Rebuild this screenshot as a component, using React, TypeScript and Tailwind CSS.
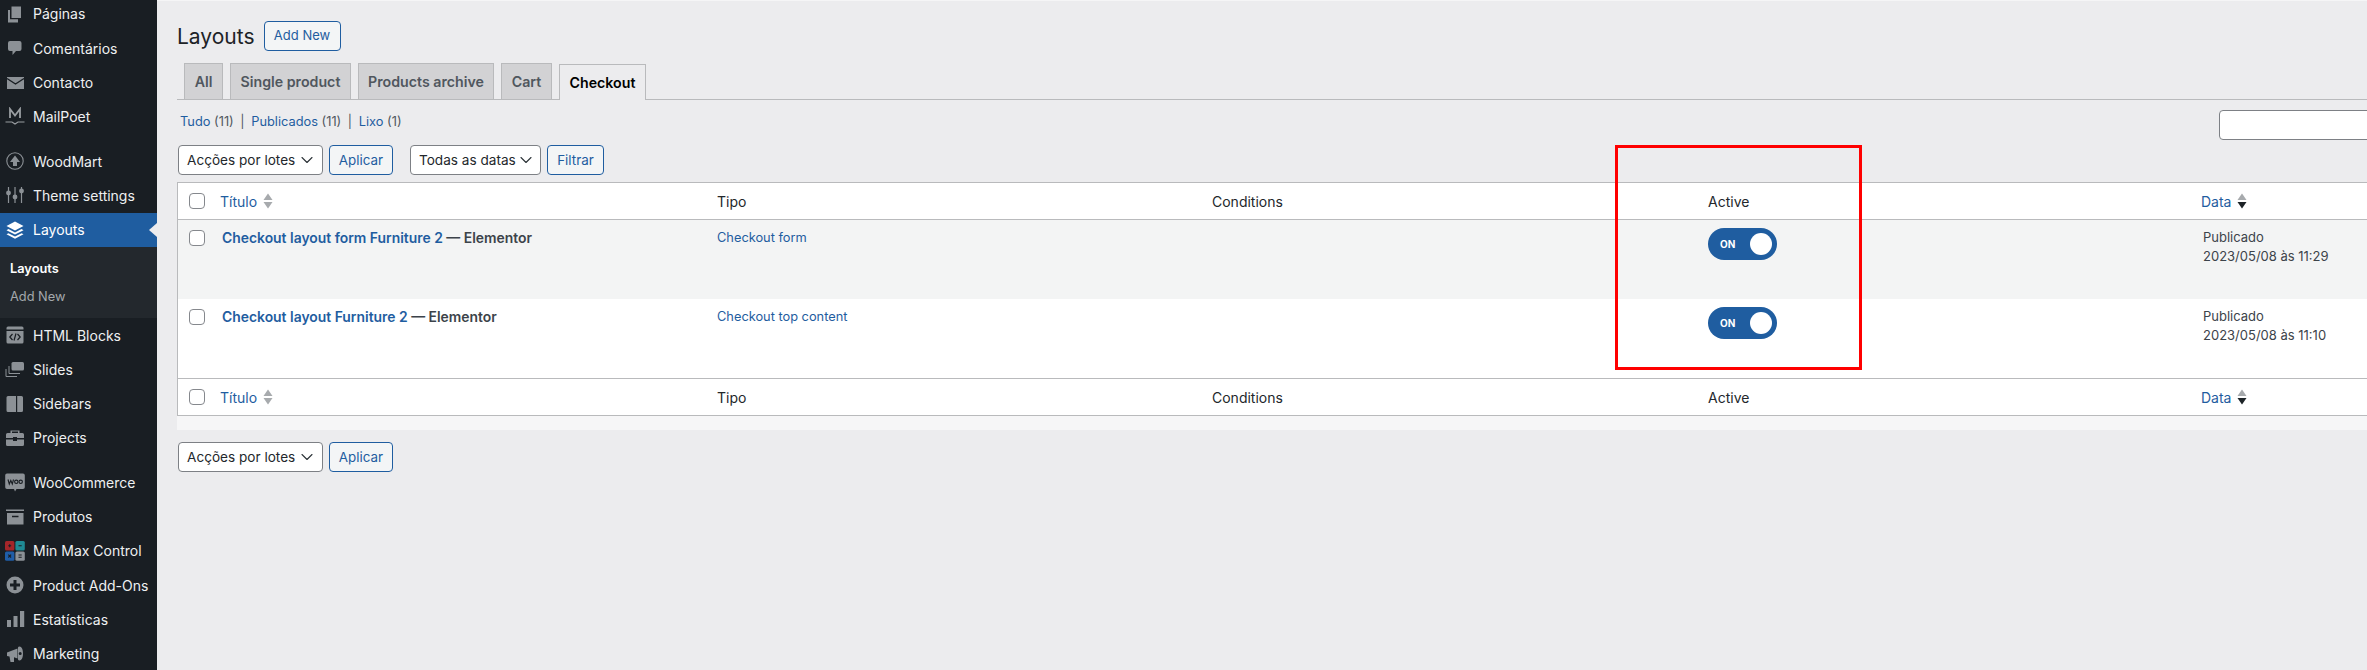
import { ReactNode } from "react";
import { ChevronDown } from "lucide-react";

const icons: Record<string, ReactNode> = {
  pages: (
    <>
      <path d="M6.500 2.500H16V14H6.500z" />
      <path d="M3 6v12.500h10V15.200H5V6z" />
    </>
  ),
  comments: <path d="M5 3h9.500a2 2 0 0 1 2 2v6a2 2 0 0 1-2 2H11l-3.500 4v-4H5a2 2 0 0 1-2-2V5a2 2 0 0 1 2-2z" />,
  mail: (
    <>
      <path d="M2 4h17v12H2z" />
      <path d="M2 5.500 10.500 11 19 5.500" fill="none" stroke="#191e23" strokeWidth="1.400" />
    </>
  ),
  mailpoet: (
    <g fill="none" stroke="#9a9ea2">
      <path d="M5 11V2l5 6.500L15 2v9" strokeWidth="1.800" />
      <path d="M0.500 15h6.500l3 2 3-2h6.500" strokeWidth="1.200" />
    </g>
  ),
  woodmart: (
    <>
      <circle cx="10" cy="10" r="8.200" fill="none" stroke="#8c9196" strokeWidth="1.100" />
      <path d="M10 4.500 15 11h-3v4H8v-4H5z" />
    </>
  ),
  sliders: (
    <g stroke="#8c9196" strokeWidth="1.200">
      <path d="M3.500 2v16M10 2v16M16.500 2v16" fill="none" />
      <circle cx="3.500" cy="8" r="1.800" />
      <circle cx="10" cy="12" r="1.800" />
      <circle cx="16.500" cy="6" r="1.800" />
    </g>
  ),
  layers: (
    <g fill="#fff">
      <path d="M10 1.500 18.500 6 10 10.500 1.500 6z" />
      <path d="M3.500 9 10 12.400 16.500 9l2 1.200L10 14.600 1.500 10.200z" />
      <path d="M3.500 13.200 10 16.500l6.500-3.300 2 1.100L10 18.700l-8.500-4.400z" />
    </g>
  ),
  html: (
    <>
      <path d="M3 1.500h14a1.500 1.500 0 0 1 1.500 1.500v1.500h-17V3A1.500 1.500 0 0 1 3 1.500z" />
      <path d="M1.500 6h17v11a1.500 1.500 0 0 1-1.500 1.500H3A1.500 1.500 0 0 1 1.500 17z" />
      <path d="M7.500 9 4.800 12l2.700 3M12.500 9l2.700 3-2.700 3M11 8.500l-2 7" fill="none" stroke="#191e23" strokeWidth="1.200" />
    </>
  ),
  slides: (
    <>
      <path d="M8 3h9.500A1.500 1.500 0 0 1 19 4.500V10a1.500 1.500 0 0 1-1.500 1.500H8A1.500 1.500 0 0 1 6.500 10V4.500A1.500 1.500 0 0 1 8 3z" />
      <path d="M4 7v7.500h11M1 10v7.500h11" fill="none" stroke="#8c9196" strokeWidth="1" />
    </>
  ),
  sidebars: <path fillRule="evenodd" d="M3 2h13.500A1.500 1.500 0 0 1 18 3.500v13a1.500 1.500 0 0 1-1.500 1.500H3a1.500 1.500 0 0 1-1.500-1.500v-13A1.500 1.500 0 0 1 3 2zm8 0v16h1.200V2z" />,
  projects: (
    <>
      <path d="M7 5V3.500h6V5h1.500V2.500h-9V5z" />
      <path d="M2.500 5h15A1.500 1.500 0 0 1 19 6.500V10h-7V9H8v1H1V6.500A1.500 1.500 0 0 1 2.500 5z" />
      <path d="M1 11.500h7V13h4v-1.500h7v5a1.500 1.500 0 0 1-1.500 1.500h-15A1.500 1.500 0 0 1 1 16.500z" />
    </>
  ),
  woo: (
    <>
      <path d="M2 1.500h16a1.800 1.800 0 0 1 1.800 1.800v12a1.800 1.800 0 0 1-1.800 1.800h-6.500L10 19.500 9 17.100H2a1.800 1.800 0 0 1-1.800-1.800v-12A1.800 1.800 0 0 1 2 1.500z" />
      <path d="M3 7.500 4.300 12l1.500-3.500L7.300 12l1.200-4.500" fill="none" stroke="#191e23" strokeWidth="1.100" />
      <circle cx="11.300" cy="9.800" r="1.700" fill="none" stroke="#191e23" strokeWidth="1.100" />
      <circle cx="15.700" cy="9.800" r="1.700" fill="none" stroke="#191e23" strokeWidth="1.100" />
    </>
  ),
  archive: (
    <>
      <path d="M1 2.500h18V4H1z" />
      <path fillRule="evenodd" d="M2 6h16.500v11.500H2zM7 8.800v1.400h6.500V8.800z" />
    </>
  ),
  minmax: (
    <>
      <rect x="0" y="0" width="9.400" height="9.400" rx="1.500" fill="#a3262a" />
      <rect x="10.400" y="0" width="9.400" height="9.400" rx="1.500" fill="#1f8a94" />
      <rect x="0" y="10.400" width="9.400" height="9.400" rx="1.500" fill="#1f5da8" />
      <rect x="10.400" y="10.400" width="9.400" height="9.400" rx="1.500" fill="#8c9196" />
      <path d="M3.200 4.700h3M4.700 3.200v3M13.500 4.700h3.200M3.300 13.700l2.800 2.800M6.100 13.700l-2.800 2.800M13.500 14h3.200M13.500 16.200h3.200" stroke="#191e23" strokeWidth="1.100" fill="none" />
    </>
  ),
  addons: (
    <path fillRule="evenodd" d="M10 1.500a8.500 8.500 0 1 1 0 17 8.500 8.500 0 0 1 0-17zM8.500 5v3.500H5v3h3.500V15h3v-3.500H15v-3h-3.500V5z" />
  ),
  stats: <path d="M2 11h4v7H2zM8.500 7h4v11h-4zM15 2h4.200v16H15z" />,
  marketing: (
    <>
      <path d="M2 8.500 12.500 4.500v10L9 13.300V18H5.500l-1-5.500L2 12z" />
      <path fillRule="evenodd" d="M14.500 2.500c2.200 0 3.500 3 3.500 7s-1.300 7-3.500 7c-.8 0-1.300-.4-1.500-1V3.500c.2-.6.700-1 1.500-1zM15.200 8a1.500 1.500 0 1 0 0 3 1.500 1.500 0 0 0 0-3z" />
    </>
  ),
};

function NavItem({ icon, label, active }: { icon: string; label: string; active?: boolean }) {
  return (
    <div className={`relative flex h-[34.3px] shrink-0 items-center gap-2 pl-[5px] text-[14px] ${active ? "bg-[#1f5da0] text-white" : "text-[#eef0f1]"}`}>
      <svg viewBox="0 0 20 20" className="h-5 w-5 shrink-0" fill="#8c9196">
        {icons[icon]}
      </svg>
      <span>{label}</span>
      {active && (
        <span className="absolute right-0 top-1/2 h-0 w-0 -translate-y-1/2 border-y-[7px] border-r-[8px] border-y-transparent border-r-[#ececee]" />
      )}
    </div>
  );
}

function Sidebar() {
  return (
    <aside className="flex h-[670px] w-[157px] shrink-0 flex-col overflow-hidden bg-[#191e23]">
      <div className="-mt-[3.2px] flex flex-col">
        <NavItem icon="pages" label="Páginas" />
        <NavItem icon="comments" label="Comentários" />
        <NavItem icon="mail" label="Contacto" />
        <NavItem icon="mailpoet" label="MailPoet" />
      </div>
      <div className="mt-[10px] flex flex-col">
        <NavItem icon="woodmart" label="WoodMart" />
        <NavItem icon="sliders" label="Theme settings" />
        <NavItem icon="layers" label="Layouts" active />
        <div className="flex h-[71px] shrink-0 flex-col bg-[#23282d] pl-[10px] pt-[13px] text-[12.8px] leading-[18px]">
          <span className="font-semibold text-white">Layouts</span>
          <span className="mt-[10px] text-[#a4a8ac]">Add New</span>
        </div>
        <NavItem icon="html" label="HTML Blocks" />
        <NavItem icon="slides" label="Slides" />
        <NavItem icon="sidebars" label="Sidebars" />
        <NavItem icon="projects" label="Projects" />
      </div>
      <div className="mt-[10px] flex flex-col">
        <NavItem icon="woo" label="WooCommerce" />
        <NavItem icon="archive" label="Produtos" />
        <NavItem icon="minmax" label="Min Max Control" />
        <NavItem icon="addons" label="Product Add-Ons" />
        <NavItem icon="stats" label="Estatísticas" />
        <NavItem icon="marketing" label="Marketing" />
      </div>
    </aside>
  );
}

function OutlineButton({ label, className }: { label: string; className: string }) {
  return (
    <button className={`h-[30px] rounded-[4px] border border-[#1f5da0] bg-[#f3f5f6] text-[13.4px] text-[#1f5da0] ${className}`}>
      {label}
    </button>
  );
}

function SelectBox({ label, className }: { label: string; className: string }) {
  return (
    <div className={`flex h-[30px] items-center justify-between whitespace-nowrap rounded-[4px] border border-[#7d8085] bg-white pl-[8px] pr-[5px] text-[13.6px] text-[#23272b] ${className}`}>
      <span>{label}</span>
      <ChevronDown size={20} strokeWidth={1.3} className="shrink-0 text-[#2c3338]" />
    </div>
  );
}

function Checkbox() {
  return <input type="checkbox" className="block h-4 w-4 appearance-none rounded-[4px] border border-[#85888d] bg-white" />;
}

function SortArrows({ dark }: { dark?: boolean }) {
  return (
    <svg viewBox="0 0 10 16" className="ml-[6px] h-4 w-[10px]">
      <path d="M5 .5 9.500 7H.5z" fill="#a7aaad" />
      <path d="M5 15.500 9.500 9H.5z" fill={dark ? "#1d2327" : "#a7aaad"} />
    </svg>
  );
}

function HeadRow({ bottom }: { bottom?: boolean }) {
  return (
    <tr className={`h-[37px] [&>td]:border-[#b9babc] ${bottom ? "[&>td]:border-t" : "[&>td]:border-b"}`}>
      <td className="pl-[11px]">
        <Checkbox />
      </td>
      <td className="pl-[8px] text-[#1f5da0]">
        <span className="flex items-center">
          Título
          <SortArrows />
        </span>
      </td>
      <td className="pl-[8px]">Tipo</td>
      <td className="pl-[8px]">Conditions</td>
      <td className="pl-[8px]">Active</td>
      <td className="pl-[8px] text-[#1f5da0]">
        <span className="flex items-center">
          Data
          <SortArrows dark />
        </span>
      </td>
    </tr>
  );
}

function Toggle() {
  return (
    <div className="flex h-[32px] w-[69px] items-center justify-between rounded-full bg-[#1f5da0] pl-[12px] pr-[5px]">
      <span className="text-[10px] font-bold text-white">ON</span>
      <span className="h-[22px] w-[22px] rounded-full bg-white" />
    </div>
  );
}

function LayoutRow({ title, type, time, striped }: { title: string; type: string; time: string; striped?: boolean }) {
  return (
    <tr className={`h-[79px] align-top ${striped ? "bg-[#f3f4f4]" : "bg-white"}`}>
      <td className="pl-[11px] pt-[10px]">
        <Checkbox />
      </td>
      <td className="pl-[10px] pt-[8px] text-[13.9px] font-semibold leading-[20px] text-[#3c434a]">
        <span className="text-[#1f5da0]">{title}</span> — Elementor
      </td>
      <td className="pl-[8px] pt-[9px] text-[12.8px] leading-[18px] text-[#1f5da0]">{type}</td>
      <td />
      <td className="pl-[8px] pt-[8px]">
        <Toggle />
      </td>
      <td className="pl-[10px] pt-[8px] text-[13px] leading-[19px] text-[#3c434a]">
        Publicado
        <br />
        {time}
      </td>
    </tr>
  );
}

function BulkActions() {
  return (
    <>
      <SelectBox label="Acções por lotes" className="ml-px w-[145px]" />
      <OutlineButton label="Aplicar" className="ml-[6px] w-[64px]" />
    </>
  );
}

const tabs = [
  { label: "All", width: "w-[39px]" },
  { label: "Single product", width: "w-[121px]" },
  { label: "Products archive", width: "w-[136px]" },
  { label: "Cart", width: "w-[51px]" },
];

export default function App() {
  return (
    <div className="relative flex h-[670px] w-full overflow-hidden bg-[#ececee] font-['Inter',sans-serif]">
      <Sidebar />
      <main className="min-w-0 flex-1 overflow-hidden border-t border-[#f5f5f6] pl-[20px] pt-[20px]">
        <div className="w-[2232px]">
          <div className="flex h-[30px] items-center">
            <h1 className="pt-px text-[21px] text-[#1d2327]">Layouts</h1>
            <button className="ml-[9px] h-[30px] w-[77px] rounded-[4px] border border-[#1f5da0] bg-[#f3f5f6] text-[13px] text-[#1f5da0]">Add New</button>
          </div>

          <div className="mt-[13px] flex h-[36px] items-end gap-[7px] border-b border-[#b9babc] pl-[7px]">
            {tabs.map((tab) => (
              <div
                key={tab.label}
                className={`flex h-[36px] items-center justify-center border border-b-0 border-[#b9babc] bg-[#d2d2d4] text-[14.2px] font-semibold text-[#50575e] ${tab.width}`}
              >
                {tab.label}
              </div>
            ))}
            <div className="-mb-px flex h-[36px] w-[87px] items-center justify-center border border-b-0 border-[#b9babc] bg-[#ececee] text-[14.2px] font-semibold text-black">
              Checkout
            </div>
          </div>

          <div className="flex h-[45px] items-start justify-between pt-[10px]">
            <p className="mt-[3px] pl-[3px] text-[12.8px] leading-[18px] text-[#50575e]">
              <span className="text-[#1f5da0]">Tudo</span> (11) <span className="mx-[3px]">|</span> <span className="text-[#1f5da0]">Publicados</span> (11) <span className="mx-[3px]">|</span> <span className="text-[#1f5da0]">Lixo</span> (1)
            </p>
            <input className="h-[30px] w-[190px] rounded-[4px] border border-[#7d8085] bg-white" />
          </div>

          <div className="flex items-center">
            <BulkActions />
            <SelectBox label="Todas as datas" className="ml-[17px] w-[131px]" />
            <OutlineButton label="Filtrar" className="ml-[6px] w-[57px]" />
          </div>

          <div className="mt-[7px] border border-[#b9babc] bg-white text-[14px] text-[#23272b]">
            <table className="w-full table-fixed border-separate border-spacing-0">
              <colgroup>
                <col className="w-[34px]" />
                <col className="w-[497px]" />
                <col className="w-[495px]" />
                <col className="w-[496px]" />
                <col className="w-[493px]" />
                <col />
              </colgroup>
              <tbody>
                <HeadRow />
                <LayoutRow title="Checkout layout form Furniture 2" type="Checkout form" time="2023/05/08 às 11:29" striped />
                <LayoutRow title="Checkout layout Furniture 2" type="Checkout top content" time="2023/05/08 às 11:10" />
                <HeadRow bottom />
              </tbody>
            </table>
          </div>
          <div className="h-[14px] bg-[#f6f6f7]" />

          <div className="mt-[12px] flex items-center">
            <BulkActions />
          </div>
        </div>
      </main>
      <div className="pointer-events-none absolute left-[1615px] top-[145px] h-[225px] w-[247px] border-[3px] border-[#ff0000]" />
    </div>
  );
}
